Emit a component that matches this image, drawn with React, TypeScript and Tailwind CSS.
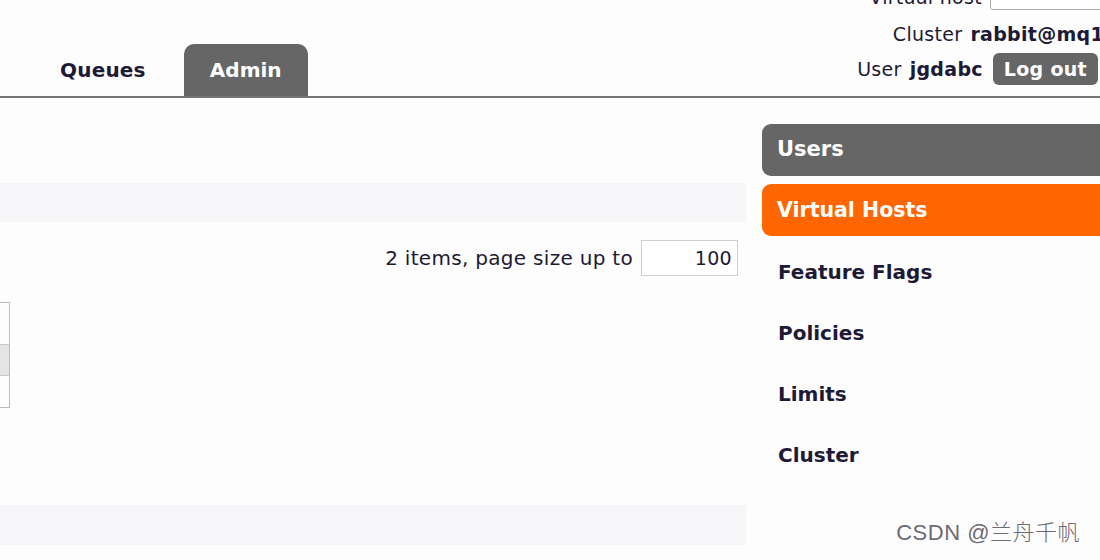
import React from 'react';

const sideItems = ['Feature Flags', 'Policies', 'Limits', 'Cluster'];

export default function App() {
  return (
    <div className="relative w-[1100px] h-[560px] overflow-hidden bg-[#fdfdfe] text-[#1d1a35] font-['DejaVu_Sans',sans-serif]">
      {/* header */}
      <div className="flex justify-between h-[98px] border-b-2 border-[#757575]">
        <div className="flex items-end pl-[60px]">
          <div className="h-[52px] flex items-center pr-[38px] text-[20px] font-bold tracking-[0.2px]">Queues</div>
          <div className="h-[52px] w-[124px] flex items-center justify-center rounded-t-[10px] bg-[#666666] text-white text-[20px] font-bold">
            Admin
          </div>
        </div>
        <div className="flex flex-col items-end mt-[-16px] text-[19px] tracking-[0.3px]">
          <div className="flex items-center gap-2 h-[26px]">
            <span>Virtual host</span>
            <div className="w-[124px] h-[26px] border border-[#aaa] rounded-[3px] bg-white mr-[-14px]" />
          </div>
          <div className="h-[36px] mt-[6px] flex items-center gap-[8px] mr-[-4px]">
            <span>Cluster</span>
            <span className="font-bold">rabbit@mq1</span>
          </div>
          <div className="h-[34px] flex items-center gap-[8px] pr-[2px]">
            <span>User</span>
            <span className="font-bold">jgdabc</span>
            <span className="ml-[2px] h-[32px] px-[11px] flex items-center rounded-[6px] bg-[#666666] text-white font-bold">Log out</span>
          </div>
        </div>
      </div>

      <div className="flex">
        {/* main */}
        <div className="w-[746px] pt-[85px]">
          <div className="h-[39px] bg-[#f6f6f9]" />
          <div className="flex items-center justify-end gap-2 mt-[18px] pr-[8px] text-[20px] tracking-[0.3px]">
            <span>2 items, page size up to</span>
            <div className="w-[97px] h-[36px] border border-[#cfcfcf] bg-white flex items-center justify-end pr-[5px] text-[19px]">100</div>
          </div>
          <div className="mt-[26px] w-[10px] h-[106px] border border-l-0 border-[#bdbdbd] flex flex-col">
            <div className="h-[41px]" />
            <div className="h-[32px] bg-[#e4e4e4] border-y border-[#c8c8c8]" />
          </div>
          <div className="mt-[97px] h-[40px] bg-[#f6f6f9]" />
        </div>

        {/* sidebar */}
        <div className="flex-1 pl-[16px] pt-[26px] mr-[-20px]">
          <div className="h-[52px] rounded-l-[9px] bg-[#666666] text-white text-[21px] font-bold flex items-center pl-[15px]">Users</div>
          <div className="mt-[8px] h-[52px] rounded-l-[9px] bg-[#ff6600] text-white text-[20.5px] font-bold flex items-center pl-[15px]">Virtual Hosts</div>
          <div className="mt-[5px]">
            {sideItems.map(item => (
              <div key={item} className="h-[61px] flex items-center pl-[16px] text-[20px] font-semibold">
                {item}
              </div>
            ))}
          </div>
        </div>
      </div>

      <div className="absolute right-[20px] bottom-[11px] text-[22px] text-[#6d6a74] font-['Liberation_Sans','Noto_Sans_CJK_SC',sans-serif] font-light tracking-[0.5px]">
        CSDN @兰舟千帆
      </div>
    </div>
  );
}
